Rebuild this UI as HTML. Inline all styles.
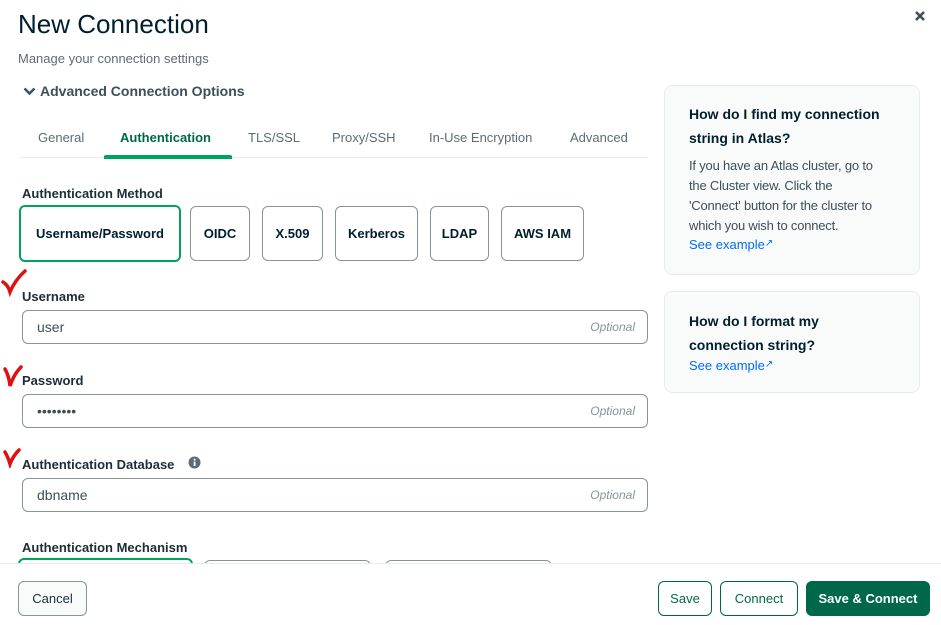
<!DOCTYPE html>
<html><head><meta charset="utf-8"><style>
*{box-sizing:border-box;margin:0;padding:0}
body{width:941px;height:625px;overflow:hidden;background:#fff;font-family:"Liberation Sans",sans-serif;color:#001e2b;position:relative}
.a{position:absolute;white-space:nowrap}
.lbl{font-size:13px;font-weight:bold;color:#1c2d38}
.btn{position:absolute;top:206px;height:55px;border:1px solid #889397;border-radius:6px;font-size:13px;font-weight:bold;display:flex;align-items:center;justify-content:center;color:#001e2b}
.inp{position:absolute;left:22px;width:626px;height:34px;border:1px solid #889397;border-radius:6px;font-size:14px;color:#3d4f58;padding-left:14px;display:flex;align-items:center}
.inp i{position:absolute;right:12px;font-size:12px;color:#889397}
.card{position:absolute;left:664px;width:256px;background:#f9fbfa;border:1px solid #e8edeb;border-radius:8px;padding:0 24px}
.card h4{font-size:14px;line-height:24px;font-weight:bold;color:#001e2b}
.card p{font-size:13px;line-height:20px;color:#3d4f58;white-space:nowrap;letter-spacing:-0.2px}
.card a{font-size:13px;color:#016bf8;text-decoration:none}
.fb{position:absolute;top:581px;height:35px;border-radius:6px;font-size:13px;display:flex;align-items:center;justify-content:center}
</style></head><body>
<div class="a" style="left:18px;top:9px;font-size:26px;color:#001e2b">New Connection</div>
<div class="a" style="left:18px;top:51px;font-size:13px;color:#5c6c75">Manage your connection settings</div>
<svg class="a" style="left:23px;top:86px" width="13" height="11" viewBox="0 0 13 11"><path d="M1.5 2.5 L6.5 7.5 L11.5 2.5" stroke="#3d4f58" stroke-width="2.4" fill="none"/></svg>
<div class="a" style="left:40px;top:83px;font-size:14px;font-weight:bold;color:#3d4f58">Advanced Connection Options</div>
<div class="a" style="left:38px;top:130px;font-size:13px;color:#5c6c75">General</div>
<div class="a" style="left:120px;top:130px;font-size:13px;font-weight:bold;color:#00684a">Authentication</div>
<div class="a" style="left:248px;top:130px;font-size:13px;color:#5c6c75">TLS/SSL</div>
<div class="a" style="left:332px;top:130px;font-size:13px;color:#5c6c75">Proxy/SSH</div>
<div class="a" style="left:429px;top:130px;font-size:13px;color:#5c6c75">In-Use Encryption</div>
<div class="a" style="left:570px;top:130px;font-size:13px;color:#5c6c75">Advanced</div>
<div class="a" style="left:20px;top:157px;width:628px;height:1px;background:#e8edeb"></div>
<div class="a" style="left:104px;top:155px;width:128px;height:4px;background:#00a35c;border-radius:2px 2px 0 0"></div>
<div class="a lbl" style="left:22px;top:186px">Authentication Method</div>
<div class="btn" style="left:19px;width:162px;border:2px solid #00a35c;top:205px;height:57px">Username/Password</div>
<div class="btn" style="left:190px;width:60px">OIDC</div>
<div class="btn" style="left:262px;width:61px">X.509</div>
<div class="btn" style="left:335px;width:83px">Kerberos</div>
<div class="btn" style="left:430px;width:59px">LDAP</div>
<div class="btn" style="left:501px;width:83px">AWS IAM</div>
<div class="a lbl" style="left:22px;top:289px">Username</div>
<div class="inp" style="top:310px">user<i>Optional</i></div>
<div class="a lbl" style="left:22px;top:373px">Password</div>
<div class="inp" style="top:394px">••••••••<i>Optional</i></div>
<div class="a lbl" style="left:22px;top:457px">Authentication Database</div>
<svg class="a" style="left:188px;top:456px" width="13" height="13" viewBox="0 0 13 13"><circle cx="6.5" cy="6.5" r="6" fill="#5c6c75"/><rect x="5.7" y="5.5" width="1.8" height="4.5" fill="#fff"/><circle cx="6.6" cy="3.6" r="1" fill="#fff"/></svg>
<div class="inp" style="top:478px">dbname<i>Optional</i></div>
<div class="a lbl" style="left:22px;top:540px">Authentication Mechanism</div>
<div class="a" style="left:18px;top:558px;width:175px;height:20px;border:2px solid #00a35c;border-radius:6px"></div>
<div class="a" style="left:204px;top:560px;width:167px;height:20px;border:1px solid #889397;border-radius:6px"></div>
<div class="a" style="left:385px;top:560px;width:167px;height:20px;border:1px solid #889397;border-radius:6px"></div>
<div class="a" style="left:0;top:563px;width:941px;height:62px;background:#fff;border-top:1px solid #e8edeb"></div>
<div class="fb" style="left:18px;width:69px;border:1px solid #889397;background:#f9fbfa;color:#1c2d38">Cancel</div>
<div class="fb" style="left:658px;width:54px;border:1px solid #00684a;color:#00684a">Save</div>
<div class="fb" style="left:720px;width:78px;border:1px solid #00684a;color:#00684a">Connect</div>
<div class="fb" style="left:806px;width:124px;background:#00684a;color:#fff;font-weight:bold">Save &amp; Connect</div>
<div class="card" style="top:85px;height:190px;padding-top:16px">
<h4>How do I find my connection string in Atlas?</h4>
<p style="margin-top:6px">If you have an Atlas cluster, go to<br>the Cluster view. Click the<br>'Connect' button for the cluster to<br>which you wish to connect.</p>
<a>See example<span style="font-size:10px;vertical-align:3px">&#x2197;</span></a>
</div>
<div class="card" style="top:291px;height:102px;padding-top:17px">
<h4>How do I format my connection string?</h4>
<a>See example<span style="font-size:10px;vertical-align:3px">&#x2197;</span></a>
</div>
<svg class="a" style="left:914px;top:10px" width="12" height="12" viewBox="0 0 12 12"><path d="M2 2L10 10M10 2L2 10" stroke="#3d4f58" stroke-width="2.6"/></svg>
<svg class="a" style="left:0;top:265px" width="28" height="32"><path d="M3 17 Q8 20 10 27 Q15 15 25 6" stroke="#e01010" stroke-width="3.5" fill="none" stroke-linecap="round"/></svg>
<svg class="a" style="left:2px;top:364px" width="22" height="26"><path d="M3 5 Q7 12 8 22 Q12 10 19 3" stroke="#e01010" stroke-width="3.5" fill="none" stroke-linecap="round"/></svg>
<svg class="a" style="left:2px;top:448px" width="22" height="20"><path d="M3 4 Q6 9 8 16 Q11 8 17 2" stroke="#e01010" stroke-width="3.5" fill="none" stroke-linecap="round"/></svg>
</body></html>
